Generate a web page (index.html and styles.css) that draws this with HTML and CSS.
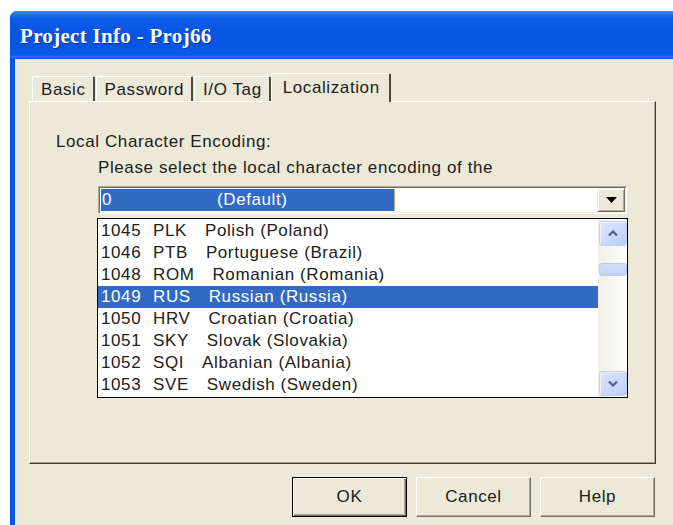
FILE: index.html
```html
<!DOCTYPE html>
<html lang="en">
<head>
<meta charset="utf-8">
<title>Project Info - Proj66</title>
<link rel="stylesheet" href="styles.css">
</head>
<body>
<div class="window">
  <div class="titlebar"><span class="title">Project Info - Proj66</span></div>
  <div class="client">
    <div class="tabs">
      <div class="tab">Basic</div>
      <div class="tab">Password</div>
      <div class="tab">I/O Tag</div>
      <div class="tab active">Localization</div>
    </div>
    <div class="panel">
      <div class="label">Local Character Encoding:</div>
      <div class="hint">Please select the local character encoding of the</div>
      <div class="combo">
        <div class="combo-field">
          <div class="combo-value"><span class="cv-num">0</span><span>(Default)</span></div>
        </div>
        <div class="combo-btn">
          <svg width="11" height="6" viewBox="0 0 11 6"><polygon points="0,0 11,0 5.5,6" fill="#000"/></svg>
        </div>
      </div>
      <div class="listbox">
        <div class="rows">
          <div class="row"><span class="num">1045</span><span class="code">PLK</span><span class="name">Polish (Poland)</span></div>
          <div class="row"><span class="num">1046</span><span class="code">PTB</span><span class="name">Portuguese (Brazil)</span></div>
          <div class="row"><span class="num">1048</span><span class="code">ROM</span><span class="name">Romanian (Romania)</span></div>
          <div class="row selected"><span class="num">1049</span><span class="code">RUS</span><span class="name">Russian (Russia)</span></div>
          <div class="row"><span class="num">1050</span><span class="code">HRV</span><span class="name">Croatian (Croatia)</span></div>
          <div class="row"><span class="num">1051</span><span class="code">SKY</span><span class="name">Slovak (Slovakia)</span></div>
          <div class="row"><span class="num">1052</span><span class="code">SQI</span><span class="name">Albanian (Albania)</span></div>
          <div class="row"><span class="num">1053</span><span class="code">SVE</span><span class="name">Swedish (Sweden)</span></div>
        </div>
        <div class="scrollbar">
          <div class="sb-btn">
            <svg width="10" height="7" viewBox="0 0 10 7"><polyline points="1,5.5 5,1.5 9,5.5" fill="none" stroke="#4D6185" stroke-width="2.2"/></svg>
          </div>
          <div class="sb-track"><div class="sb-thumb"></div></div>
          <div class="sb-btn">
            <svg width="10" height="7" viewBox="0 0 10 7"><polyline points="1,1.5 5,5.5 9,1.5" fill="none" stroke="#4D6185" stroke-width="2.2"/></svg>
          </div>
        </div>
      </div>
    </div>
    <div class="buttons">
      <button class="btn default">OK</button>
      <button class="btn">Cancel</button>
      <button class="btn">Help</button>
    </div>
  </div>
</div>
</body>
</html>
```
FILE: styles.css
```css
html, body {
  margin: 0;
  padding: 0;
  background: #ffffff;
  overflow: hidden;
}

.window {
  margin: 11px 0 0 10px;
  height: 514px;
  display: flex;
  flex-direction: column;
  background: #0055e5;
  border-top-left-radius: 7px;
  overflow: hidden;
}

/* Luna-style caption */
.titlebar {
  height: 48px;
  flex: none;
  display: flex;
  align-items: center;
  padding: 3px 0 0 10px;
  box-sizing: border-box;
  background: linear-gradient(to bottom,
    #3f8cf3 0px, #2f7ff1 2px, #1a6cee 4px, #0a5de8 8px, #0657e4 20px,
    #0555e2 34px, #0a5be8 44px, #2c72ee 46px, #0a49c8 48px);
}

.title {
  font-family: "Liberation Serif", "DejaVu Serif", serif;
  font-weight: bold;
  font-size: 21px;
  letter-spacing: 0.3px;
  color: #ffffff;
  text-shadow: 1px 1px 0 #0b2f9e;
}

.client {
  flex: 1;
  margin-left: 5px;
  background: #ece9d8;
  padding: 14px 17px 0 14px;
  font-family: "Liberation Sans", Arial, sans-serif;
  font-size: 17px;
  letter-spacing: 0.6px;
  color: #202020;
}

/* property sheet tabs */
.tabs {
  display: flex;
  align-items: flex-end;
  height: 28px;
  padding-left: 3px;
}

.tab {
  height: 25px;
  box-sizing: border-box;
  padding: 2px 7px 0 8px;
  line-height: 22px;
  border-top: 1px solid #ffffff;
  border-left: 1px solid #ffffff;
  border-right: 2px solid #4a4842;
  border-top-left-radius: 2px;
  border-top-right-radius: 2px;
  margin-right: 1px;
  white-space: nowrap;
}

.tab.active {
  height: 29px;
  margin-bottom: -1px;
  padding: 3px 9px 0 11px;
  background: #ece9d8;
  position: relative;
  z-index: 1;
  margin-left: -1px;
}

.panel {
  height: 363px;
  box-sizing: border-box;
  border-top: 1px solid #ffffff;
  border-left: 1px solid #ffffff;
  border-right: 1px solid #3c3b36;
  border-bottom: 1px solid #3c3b36;
  box-shadow: inset -1px -1px 0 #aca899;
  padding: 30px 0 0 26px;
}

.label {
  line-height: 20px;
}

.hint {
  margin: 6px 0 0 42px;
  line-height: 20px;
}

/* drop-down combo */
.combo {
  margin: 8px 0 0 42px;
  width: 529px;
  height: 28px;
  box-sizing: border-box;
  background: #ffffff;
  border-top: 1px solid #aca899;
  border-left: 1px solid #aca899;
  border-right: 1px solid #ffffff;
  border-bottom: 1px solid #ffffff;
  box-shadow: inset 1px 1px 0 #716f64, inset -1px -1px 0 #f1efe2;
  padding: 1px;
  display: flex;
}

.combo-field {
  flex: 1;
  padding: 1px;
}

.combo-value {
  width: 294px;
  height: 22px;
  box-sizing: border-box;
  background: #316ac5;
  border-right: 1px solid #c9a46a;
  color: #ffffff;
  line-height: 22px;
  display: flex;
  padding-left: 1px;
}

.cv-num {
  width: 115px;
}

.combo-btn {
  width: 28px;
  height: 24px;
  box-sizing: border-box;
  background: #ece9d8;
  border-top: 1px solid #f1efe2;
  border-left: 1px solid #f1efe2;
  border-right: 1px solid #716f64;
  border-bottom: 1px solid #716f64;
  box-shadow: inset 1px 1px 0 #ffffff, inset -1px -1px 0 #aca899;
  display: flex;
  align-items: center;
  justify-content: center;
}

/* open drop-down list */
.listbox {
  margin: 4px 0 0 41px;
  width: 531px;
  height: 180px;
  box-sizing: border-box;
  border: 1px solid #000000;
  background: #ffffff;
  display: flex;
}

.rows {
  width: 500px;
  padding-top: 1px;
}

.row {
  height: 22px;
  line-height: 22px;
  padding-left: 3px;
  white-space: nowrap;
  display: flex;
}

.row.selected {
  background: #316ac5;
  color: #ffffff;
}

.num {
  width: 52px;
  flex: none;
}

.name {
  margin-left: 18px;
}

.scrollbar {
  flex: 1;
  display: flex;
  flex-direction: column;
  padding: 2px 0 1px 1px;
  background: linear-gradient(to right, #f1efe6, #fdfdfa);
}

.sb-btn {
  height: 25px;
  box-sizing: border-box;
  border: 1px solid #c0d0f4;
  border-radius: 3px;
  background: linear-gradient(to bottom right, #dde7fd, #bccdf8);
  box-shadow: inset 1px 1px 0 #eef3fe;
  display: flex;
  align-items: center;
  justify-content: center;
}

.sb-track {
  flex: 1;
  padding-top: 17px;
}

.sb-thumb {
  height: 13px;
  box-sizing: border-box;
  border: 1px solid #b8cbf4;
  border-radius: 3px;
  background: linear-gradient(to bottom, #d3e0fc, #c1d2f9);
}

/* dialog command buttons */
.buttons {
  display: flex;
  justify-content: flex-end;
  gap: 9px;
  margin-top: 13px;
  padding-right: 1px;
}

.btn {
  width: 115px;
  height: 40px;
  box-sizing: border-box;
  font-family: "Liberation Sans", Arial, sans-serif;
  font-size: 17px;
  letter-spacing: 0.6px;
  color: #202020;
  background: #ece9d8;
  border-top: 1px solid #ffffff;
  border-left: 1px solid #ffffff;
  border-right: 1px solid #716f64;
  border-bottom: 1px solid #716f64;
  box-shadow: inset -1px -1px 0 #aca899;
  padding: 0;
  margin: 0;
}

.btn.default {
  border: 1px solid #000000;
  box-shadow: inset 1px 1px 0 #ffffff, inset -1px -1px 0 #716f64, inset -2px -2px 0 #aca899;
}
```
